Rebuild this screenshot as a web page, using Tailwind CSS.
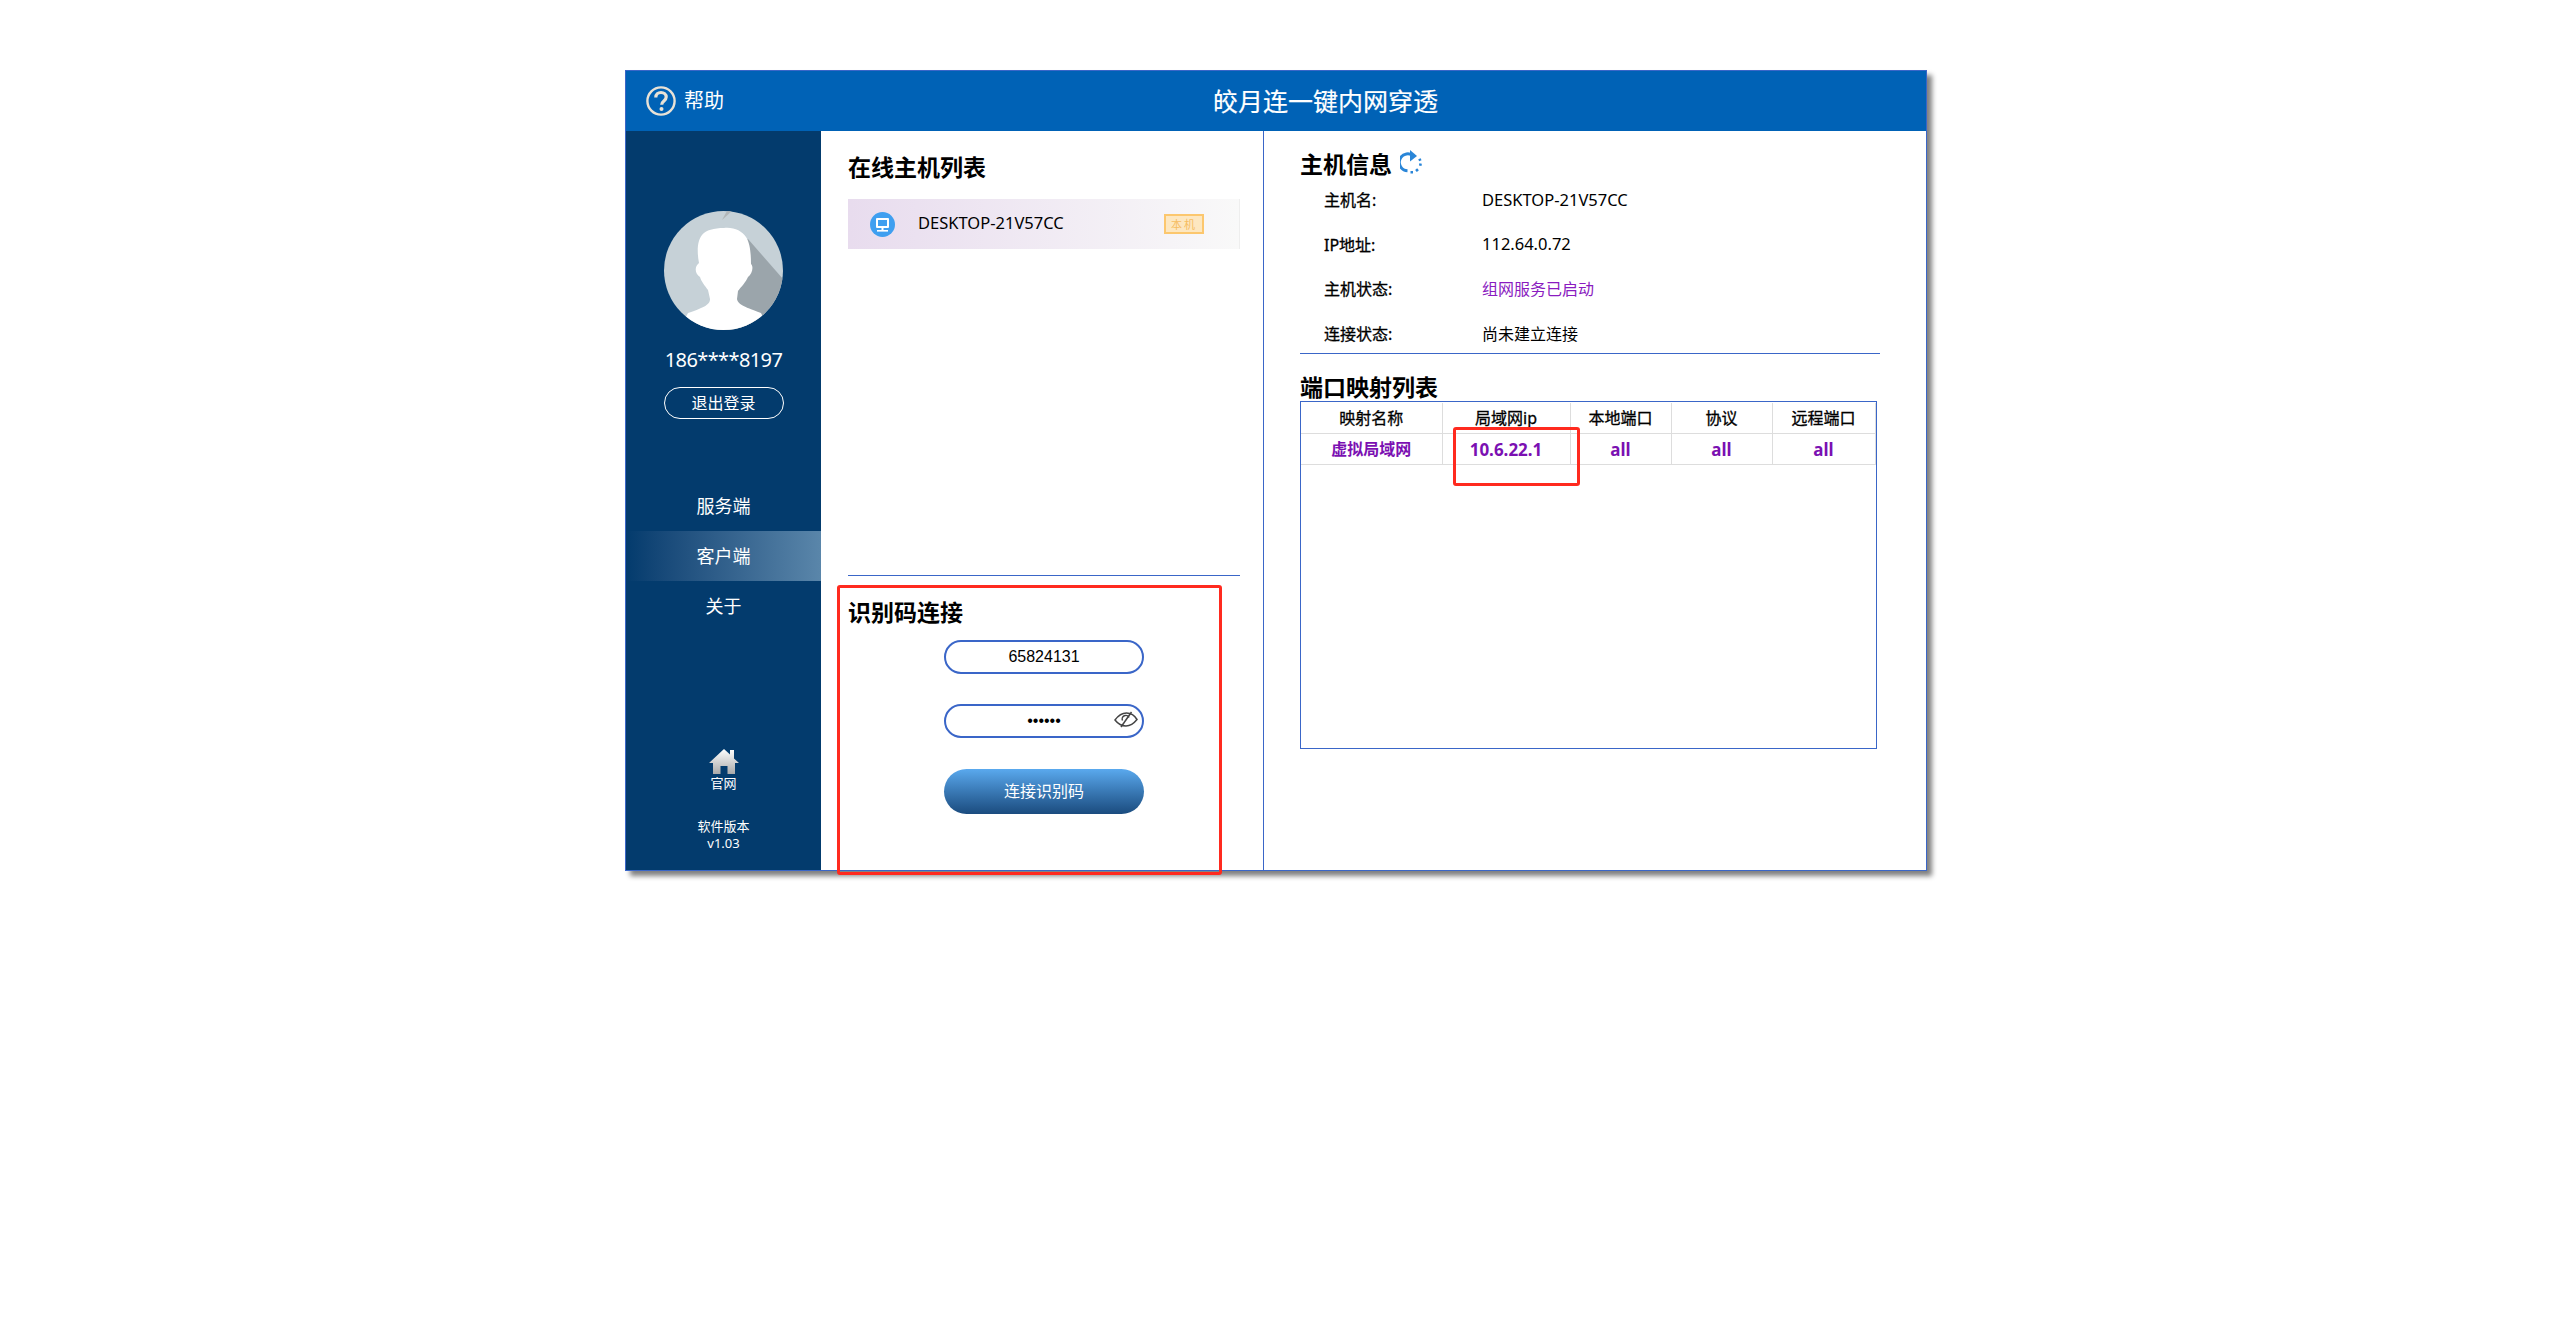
<!DOCTYPE html>
<html lang="zh">
<head>
<meta charset="utf-8">
<title>皎月连一键内网穿透</title>
<script src="https://cdn.jsdelivr.net/npm/@tailwindcss/browser@4"></script>
</head>
<body class="bg-white m-0 h-[1322px] overflow-hidden font-['Noto_Sans','Noto_Sans_CJK_SC',sans-serif] text-black">
<div class="pt-[70px] pl-[625px]">
  <div class="relative w-[1302px] h-[801px] border border-[#3a66c8] bg-white flex flex-col shadow-[5px_5px_5px_#808080]">
    <header class="h-[60px] shrink-0 bg-[#0062b6] flex items-center text-white">
      <svg class="ml-[20px] w-[30px] h-[30px]" viewBox="0 0 30 30" fill="none" stroke="#e9e2d6"><circle cx="15" cy="15" r="13.6" stroke-width="2.400"/><path d="M9.800 11.500c0-3.200 2.400-5 5.200-5s5.200 1.800 5.200 4.600c0 3.900-4.500 3.800-4.500 7.600" stroke-width="3.200"/><circle cx="15.500" cy="23" r="2" fill="#e9e2d6" stroke="none"/></svg>
      <span class="ml-[8px] text-[20px] leading-none">帮助</span>
      <h1 class="ml-[489px] text-[25px] leading-none font-normal whitespace-nowrap [-webkit-text-stroke:0.2px_white]">皎月连一键内网穿透</h1>
    </header>
    <div class="flex flex-1 min-h-0">
      <aside class="w-[195px] shrink-0 bg-[#033b6d] text-white flex flex-col items-center">
        <svg class="mt-[80px] w-[119px] h-[119px]" viewBox="0 0 119 119">
          <defs><clipPath id="av"><circle cx="59.500" cy="59.500" r="59.500"/></clipPath></defs>
          <g clip-path="url(#av)">
            <rect width="119" height="119" fill="#c6d1d7"/>
            <path d="M58 9 L63 0 L68 0Z" fill="#b1b6b8"/>
            <path d="M84 28 L119 68 L119 119 L60 119 L60 40Z" fill="#9ba5ab"/>
            <path d="M60 17C70 16 78 20 82 26C86 32 87 42 87 53C90 56 88 63 84 66C82 71 77 76 74 80L73 88C74 93 78 95 97 102L108 125L12 125L24 102C42 96 46 93 46 88L44 79C41 75 37 70 36 66C31 63 30 56 35 52C33 42 33 30 38 24C42 19 50 17 60 17Z" fill="#fff"/>
          </g>
        </svg>
        <div class="mt-[16px] h-[28px] leading-[28px] text-[20px] tracking-[-0.6px]">186****8197</div>
        <button class="mt-[13px] w-[120px] h-[32px] rounded-full border border-white text-[16px] leading-none text-white">退出登录</button>
        <nav class="mt-[62px] w-full text-[18px]">
          <div class="h-[50px] flex items-center justify-center">服务端</div>
          <div class="h-[50px] flex items-center justify-center bg-gradient-to-r from-[#033b6d] to-[#5a86aa]">客户端</div>
          <div class="h-[50px] flex items-center justify-center">关于</div>
        </nav>
        <svg class="mt-[118px] w-[30px] h-[25px]" viewBox="0 0 30 25">
          <defs><linearGradient id="hm" x1="0" y1="0" x2="0" y2="1"><stop offset="0" stop-color="#ffffff"/><stop offset="1" stop-color="#a9a9a9"/></linearGradient></defs>
          <path d="M15 0 L21 5.500 L21 1 L25 1 L25 9.500 L30 14 L26 14 L26 25 L18.500 25 L18.500 17 L11.500 17 L11.500 25 L4 25 L4 14 L0 14Z" fill="url(#hm)"/>
        </svg>
        <div class="text-[13px] leading-[18px]">官网</div>
        <div class="mt-[26px] text-[13px] leading-[17px] text-center">软件版本<br>v1.03</div>
      </aside>

      <section class="w-[442px] shrink-0 pl-[27px] pr-[23px] pt-[20px]">
        <h2 class="text-[23px] leading-[32px] font-bold">在线主机列表</h2>
        <div class="mt-[16px] h-[50px] flex items-center bg-gradient-to-r from-[#e8dcee] to-[#f9f9f9] border-r border-[#eeeeee]">
          <svg class="ml-[22px] w-[25px] h-[25px]" viewBox="0 0 25 25"><circle cx="12.500" cy="12.500" r="12.500" fill="#3f9ff0"/><rect x="6" y="6" width="13" height="10" rx="1" fill="#fff"/><rect x="8" y="8" width="9" height="6" fill="#3f9ff0"/><rect x="11.500" y="16" width="2" height="2" fill="#fff"/><rect x="7" y="18" width="11" height="1.600" fill="#fff"/></svg>
          <span class="ml-[23px] -mt-px text-[16.500px] leading-none">DESKTOP-21V57CC</span>
          <span class="ml-auto mr-[35px] w-[40px] h-[20px] flex items-center justify-center border-2 border-[#fcc76e] bg-[#fde7c0] text-[#f6bd62] text-[11px] tracking-[2px] leading-none">本机</span>
        </div>
        <div class="mt-[326px] border-t border-[#3a66c8]"></div>
        <h2 class="mt-[20px] text-[23px] leading-[32px] font-bold">识别码连接</h2>
        <div class="ml-[96px] w-[200px] flex flex-col font-['Liberation_Sans','Noto_Sans_CJK_SC',sans-serif]">
          <input class="mt-[12px] w-full h-[34px] rounded-full border-2 border-[#3a66c8] text-center text-[16px] text-black outline-none" value="65824131">
          <div class="relative mt-[30px] h-[34px]">
            <input type="password" class="w-full h-full rounded-full border-2 border-[#3a66c8] text-center text-[16px] text-black outline-none" value="123456">
            <svg class="absolute left-[170px] top-[7px] w-[24px] h-[17px]" viewBox="0 0 24 17" fill="none" stroke="#444" stroke-width="1.500"><path d="M1 9C5 3.500 9 2 12.500 2S20 3.500 23 8.500C19 13.500 15.500 15 12 15S4.500 13.500 1 9Z"/><path d="M8.500 9.500A3.500 3.500 0 0 1 15 6.500"/><path d="M17.500 1L7 16"/></svg>
          </div>
          <button class="mt-[31px] w-full h-[45px] rounded-full bg-gradient-to-b from-[#5aa9ee] to-[#1b4c7f] text-white text-[16px] leading-none pt-px">连接识别码</button>
        </div>
      </section>

      <section class="flex-1 border-l border-[#3a66c8] pl-[36px] pt-[17px]">
        <div class="flex items-center h-[32px]">
          <h2 class="text-[23px] leading-[32px] font-bold">主机信息</h2>
          <svg class="ml-[8px] -mt-[5px] w-[23px] h-[24px]" viewBox="0 0 23 24" fill="none" stroke="#2a86d8" stroke-width="3"><path d="M14 6.500A8.500 8.500 0 1 0 7.500 20.800"/><path d="M10 0L17 6L10 11.500Z" fill="#2a86d8" stroke="none"/><path d="M10.500 22.300H13M16 21L18 19.200M20.200 15.800L20.600 13.600M20.300 10.800L19.500 8.800" stroke-width="2.600"/></svg>
        </div>
        <dl class="mt-[8px] text-[16.500px]">
          <div class="flex h-[24px] items-center mb-[20.600px]"><dt class="ml-[24px] w-[158px] text-[16px] [-webkit-text-stroke:0.3px_black]">主机名:</dt><dd>DESKTOP-21V57CC</dd></div>
          <div class="flex h-[24px] items-center mb-[20.600px]"><dt class="ml-[24px] w-[158px] text-[16px] [-webkit-text-stroke:0.3px_black]">IP地址:</dt><dd>112.64.0.72</dd></div>
          <div class="flex h-[24px] items-center mb-[20.600px]"><dt class="ml-[24px] w-[158px] text-[16px] [-webkit-text-stroke:0.3px_black]">主机状态:</dt><dd class="text-[16px] text-[#8a1bc0]">组网服务已启动</dd></div>
          <div class="flex h-[24px] items-center"><dt class="ml-[24px] w-[158px] text-[16px] [-webkit-text-stroke:0.3px_black]">连接状态:</dt><dd class="text-[16px]">尚未建立连接</dd></div>
        </dl>
        <div class="mt-[7px] w-[580px] border-t border-[#3a66c8]"></div>
        <h2 class="mt-[20px] text-[23px] leading-[27px] font-bold">端口映射列表</h2>
        <div class="w-[577px] h-[348px] border border-[#3a66c8] pt-px">
          <table class="table-fixed w-[574px] border-collapse text-[16px] text-center">
            <colgroup><col class="w-[141px]"><col class="w-[128px]"><col class="w-[101px]"><col class="w-[101px]"><col class="w-[103px]"></colgroup>
            <thead>
              <tr class="h-[31px]">
                <th class="border border-[#dddddd] border-t-0 border-l-0 font-normal p-0 [-webkit-text-stroke:0.3px_black]">映射名称</th>
                <th class="border border-[#dddddd] border-t-0 font-normal p-0 [-webkit-text-stroke:0.3px_black]">局域网ip</th>
                <th class="border border-[#dddddd] border-t-0 font-normal p-0 [-webkit-text-stroke:0.3px_black]">本地端口</th>
                <th class="border border-[#dddddd] border-t-0 font-normal p-0 [-webkit-text-stroke:0.3px_black]">协议</th>
                <th class="border border-[#dddddd] border-t-0 font-normal p-0 [-webkit-text-stroke:0.3px_black]">远程端口</th>
              </tr>
            </thead>
            <tbody class="text-[#7b10b2] font-bold">
              <tr class="h-[31px]">
                <td class="border border-[#dddddd] border-l-0 p-0">虚拟局域网</td>
                <td class="border border-[#dddddd] p-0 text-[17px]">10.6.22.1</td>
                <td class="border border-[#dddddd] p-0 text-[17px]">all</td>
                <td class="border border-[#dddddd] p-0 text-[17px]">all</td>
                <td class="border border-[#dddddd] p-0 text-[17px]">all</td>
              </tr>
            </tbody>
          </table>
        </div>
      </section>
    </div>
    <div class="absolute left-[211px] top-[514px] w-[385px] h-[290px] border-[3px] border-[#ff2a1f] rounded-[3px] pointer-events-none"></div>
    <div class="absolute left-[827px] top-[356px] w-[127px] h-[59px] border-[3px] border-[#ff2a1f] rounded-[3px] pointer-events-none"></div>
  </div>
</div>
</body>
</html>
